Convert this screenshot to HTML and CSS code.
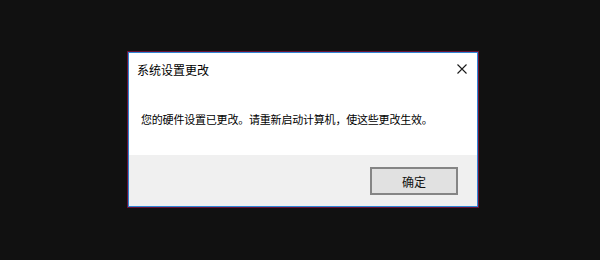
FILE: index.html
```html
<!DOCTYPE html>
<html lang="zh-CN">
<head>
    <meta charset="UTF-8">
    <title>系统设置更改</title>
    <link rel="stylesheet" href="styles.css">
</head>
<body>

    <div class="dialog">
        <div class="title-bar">
            <span class="title">系统设置更改</span>
            <svg class="close" width="10" height="10" viewBox="0 0 10 10">
                <path d="M0.5 0.5 L9.5 9.5 M9.5 0.5 L0.5 9.5" stroke="#1a1a1a" stroke-width="1.1" fill="none"/>
            </svg>
        </div>

        <div class="message">您的硬件设置已更改。请重新启动计算机，使这些更改生效。</div>

        <div class="footer">
            <button class="ok-btn">确定</button>
        </div>
    </div>

</body>
</html>
```

FILE: styles.css
```css
body {
    margin: 0;
    padding: 52px 0 0 128px;
    background-color: #111111;
    font-family: "Noto Sans CJK SC", "Noto Sans", sans-serif;
    height: 260px;
    box-sizing: border-box;
}

.dialog {
    width: 350px;
    height: 155px;
    box-sizing: border-box;
    background: #ffffff;
    border: 1px solid #2f86d6;
    box-shadow: 0 0 0 1px #6a1236;
    display: flex;
    flex-direction: column;
}

.title-bar {
    height: 32px;
    display: flex;
    align-items: center;
    justify-content: space-between;
    padding: 0 10px 0 8px;
}

.title {
    font-size: 12px;
    color: #000;
}

.message {
    flex: 1;
    padding: 26px 0 0 12px;
    font-size: 11px;
    letter-spacing: -0.2px;
    line-height: 16px;
    color: #000;
}

.footer {
    height: 51px;
    background: #f0f0f0;
    display: flex;
    justify-content: flex-end;
    align-items: flex-start;
    padding: 12px 19px 0 0;
    box-sizing: border-box;
}

.ok-btn {
    width: 88px;
    height: 28px;
    background: #e1e1e1;
    border: 2px solid #858585;
    font-family: "Noto Sans CJK SC", sans-serif;
    font-size: 12px;
    color: #111;
    padding: 0;
}
```
